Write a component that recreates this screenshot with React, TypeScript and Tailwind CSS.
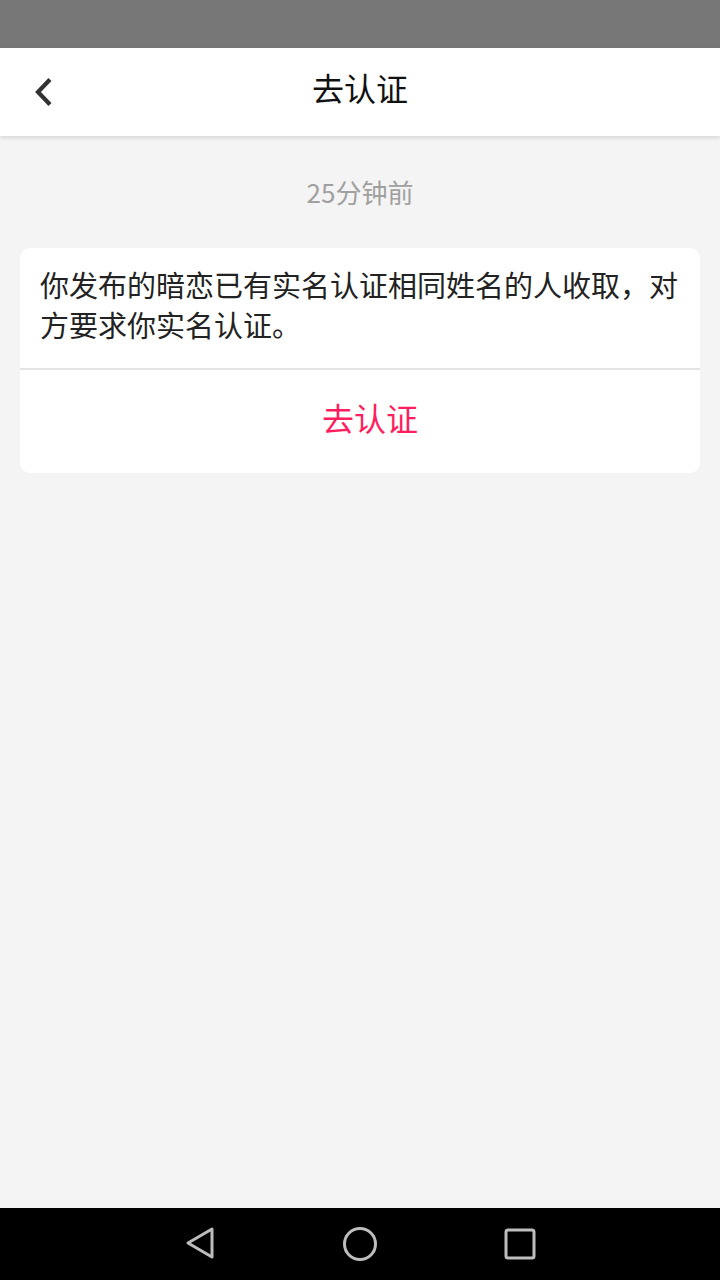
import React from "react";

export default function App() {
  const font = { fontFamily: '"Noto Sans CJK SC", "Noto Sans", Roboto, sans-serif' };
  return (
    <div className="w-[720px] h-[1280px] flex flex-col bg-[#f4f4f4]" style={font}>
      <div className="h-[48px] bg-[#777777] shrink-0" />
      <div className="h-[88px] bg-white shrink-0 relative flex items-center justify-center pb-[10px] shadow-[0_2px_4px_rgba(0,0,0,0.12)] z-10">
        <div className="absolute left-[30px] top-[28px]">
          <svg width="28" height="32" viewBox="0 0 28 32">
            <path d="M20 3.5 L8 16 L20 28.5" fill="none" stroke="#333" strokeWidth="4.2" strokeLinecap="butt" strokeLinejoin="miter" />
          </svg>
        </div>
        <div className="text-[32px] leading-none text-[#111]">去认证</div>
      </div>
      <div className="flex-1 flex flex-col items-center">
        <div className="mt-[38px] text-[26px] leading-[36px] text-[#a0a0a0]">25分钟前</div>
        <div className="mt-[38px] w-[680px] bg-white rounded-[10px] overflow-hidden">
          <div className="px-[20px] pt-[16px] pb-[24px] text-[29px] leading-[40px] text-[#222]">
            你发布的暗恋已有实名认证相同姓名的人收取，对方要求你实名认证。
          </div>
          <div className="h-[2px] bg-[#e4e4e4]" />
          <div className="h-[103px] flex items-center justify-center pl-[20px] pb-[10px] text-[32px] text-[#ff1f60]">去认证</div>
        </div>
      </div>
      <div className="h-[72px] bg-black shrink-0 flex items-center justify-center">
        <div className="flex items-center w-[352px] justify-between">
          <svg width="32" height="36" viewBox="0 0 32 36">
            <path d="M28 3 L4 17 L28 31 Z" fill="none" stroke="#bdbdbd" strokeWidth="3" strokeLinejoin="round" />
          </svg>
          <svg width="36" height="36" viewBox="0 0 36 36">
            <circle cx="18" cy="18" r="15.5" fill="none" stroke="#bdbdbd" strokeWidth="3" />
          </svg>
          <svg width="32" height="32" viewBox="0 0 32 32">
            <rect x="2" y="2" width="28" height="28" rx="2" fill="none" stroke="#bdbdbd" strokeWidth="3" />
          </svg>
        </div>
      </div>
    </div>
  );
}
